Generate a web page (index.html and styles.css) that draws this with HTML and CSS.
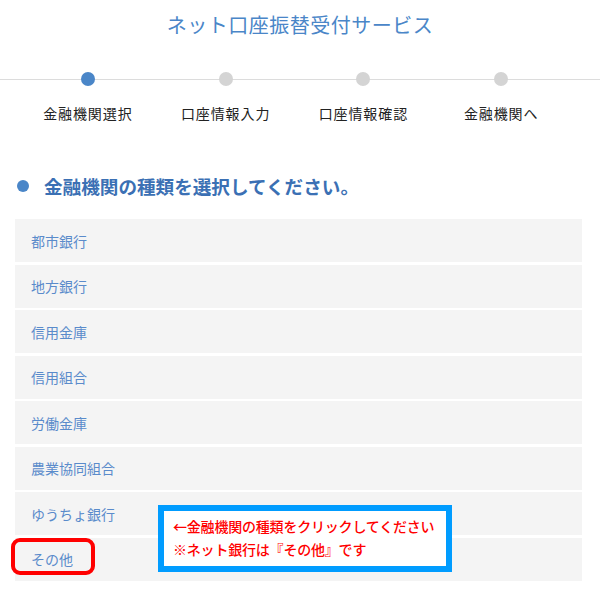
FILE: index.html
```html
<!DOCTYPE html>
<html lang="ja">
<head>
<meta charset="utf-8">
<title>ネット口座振替受付サービス</title>
<link rel="stylesheet" href="styles.css">
</head>
<body>
<header class="title">ネット口座振替受付サービス</header>
<ol class="steps">
  <li class="step is-current"><span class="dot"></span><span class="label">金融機関選択</span></li>
  <li class="step"><span class="dot"></span><span class="label">口座情報入力</span></li>
  <li class="step"><span class="dot"></span><span class="label">口座情報確認</span></li>
  <li class="step"><span class="dot"></span><span class="label">金融機関へ</span></li>
</ol>
<h2 class="heading">金融機関の種類を選択してください。</h2>
<div class="list-wrap">
  <ul class="bank-list">
    <li class="bank">都市銀行</li>
    <li class="bank">地方銀行</li>
    <li class="bank">信用金庫</li>
    <li class="bank">信用組合</li>
    <li class="bank">労働金庫</li>
    <li class="bank">農業協同組合</li>
    <li class="bank">ゆうちょ銀行</li>
    <li class="bank bank-other">その他<span class="mark"></span></li>
  </ul>
  <div class="note">
    <p>←金融機関の種類をクリックしてください</p>
    <p>※ネット銀行は『その他』です</p>
  </div>
</div>
</body>
</html>
```
FILE: styles.css
```css
* { box-sizing: border-box; }
html, body {
  margin: 0;
  padding: 0;
  background: #fff;
}
body {
  width: 600px;
  font-family: "Noto Sans CJK JP", "Noto Sans", sans-serif;
  color: #333;
}
.title {
  padding-top: 10px;
  font-size: 20px;
  line-height: 30px;
  text-align: center;
  color: #4a86c8;
  letter-spacing: 0.5px;
}
.steps {
  position: relative;
  list-style: none;
  margin: 32px 0 0;
  padding: 0 30px 0 19px;
  display: grid;
  grid-template-columns: repeat(4, 1fr);
}
.steps::before {
  content: "";
  position: absolute;
  left: 0;
  right: 0;
  top: 7px;
  height: 1px;
  background: #dcdcdc;
}
.step {
  position: relative;
  display: flex;
  flex-direction: column;
  align-items: center;
}
.dot {
  width: 14px;
  height: 14px;
  border-radius: 50%;
  background: #d4d4d4;
}
.is-current .dot { background: #4a86c8; }
.label {
  margin-top: 17px;
  font-size: 14px;
  line-height: 20px;
  color: #222;
  letter-spacing: 0.9px;
}
.heading {
  position: relative;
  margin: 48px 0 0;
  padding-left: 44px;
  font-size: 18.6px;
  line-height: 30px;
  font-weight: bold;
  color: #3b70b4;
}
.heading::before {
  content: "";
  position: absolute;
  left: 17px;
  top: 9px;
  width: 12px;
  height: 12px;
  border-radius: 50%;
  background: #4a86c8;
}
.list-wrap {
  position: relative;
  margin: 18px 18px 0 15px;
}
.bank-list {
  list-style: none;
  margin: 0;
  padding: 0;
  display: flex;
  flex-direction: column;
  gap: 2.5px;
}
.bank {
  position: relative;
  height: 43px;
  padding-left: 16px;
  display: flex;
  align-items: center;
  background: #f4f4f4;
  font-size: 14px;
  color: #5a8bcb;
}
.mark {
  position: absolute;
  left: -4px;
  top: 0;
  width: 84px;
  height: 37px;
  border: 4px solid #ff0000;
  border-radius: 9px;
}
.note {
  position: absolute;
  left: 143px;
  top: 286px;
  width: 294px;
  height: 67px;
  padding: 4px 0 0 9px;
  background: #fff;
  border: 6px solid #009cff;
  color: #ff0000;
  font-size: 14px;
  font-weight: 500;
  line-height: 23px;
  letter-spacing: -0.2px;
}
.note p { margin: 0; }
```
